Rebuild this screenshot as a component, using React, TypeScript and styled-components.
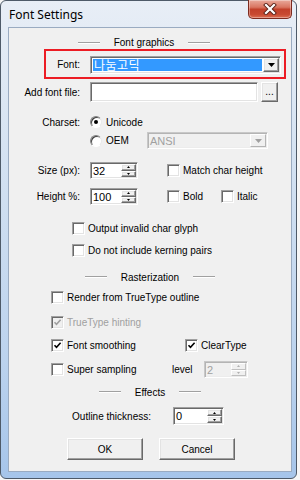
import React from "react";
import styled, { createGlobalStyle, css } from "styled-components";

const Global = createGlobalStyle`
  html, body { margin: 0; padding: 0; background: #f6f6f6; }
  * { box-sizing: border-box; }
  #root { width: 300px; height: 480px; }
`;

const sunken = css`
  border: 1px solid;
  border-color: #a0a0a0 #ffffff #ffffff #a0a0a0;
  box-shadow: inset 1px 1px 0 #696969, inset -1px -1px 0 #e3e3e3;
`;

const raised = css`
  border: 1px solid;
  border-color: #ffffff #696969 #696969 #ffffff;
  box-shadow: inset -1px -1px 0 #a0a0a0, inset 1px 1px 0 #e3e3e3;
`;

const Window = styled.div`
  width: 297px;
  height: 479px;
  display: flex;
  flex-direction: column;
  border: 1px solid #4e5a68;
  border-radius: 6px;
  background: linear-gradient(180deg, #e8eef6 0%, #d6e3f2 30%, #bcd3ee 75%, #a6c5ea 100%);
  padding: 0 4px 6px 7px;
  font-family: "Liberation Sans", Arial, sans-serif;
  font-size: 10px;
  color: #000;
`;

const TitleBar = styled.div`
  height: 26px;
  display: flex;
  align-items: center;
  justify-content: space-between;
  flex-shrink: 0;
`;

const Title = styled.span`
  font-family: "Noto Sans", "Open Sans", sans-serif;
  font-size: 12px;
  color: #000;
  padding-left: 1px;
`;

const CloseButton = styled.div`
  align-self: flex-start;
  margin-top: -1px;
  width: 44px;
  height: 19px;
  border: 1px solid #7d2b1f;
  border-top: none;
  border-radius: 0 0 5px 5px;
  background: linear-gradient(180deg, #e9a99b 0%, #d97561 40%, #c2402a 52%, #c84a31 80%, #dc6e52 100%);
  box-shadow: inset 0 0 0 1px rgba(255, 255, 255, 0.35);
  display: flex;
  align-items: center;
  justify-content: center;
`;

const Client = styled.div`
  flex: 1;
  display: flex;
  flex-direction: column;
  background: #f0f0f0;
  box-shadow: inset 0 0 0 1px #9aabc1;
  padding-top: 9px;
`;

const Header = styled.div<{ $mt: number; $h: number; $shift?: number }>`
  display: flex;
  justify-content: center;
  align-items: center;
  gap: 14px;
  margin-top: ${(p) => p.$mt}px;
  height: ${(p) => p.$h}px;
  padding-right: ${(p) => p.$shift ?? 0}px;
  flex-shrink: 0;
`;

const Rule = styled.span`
  width: 22px;
  height: 2px;
  border-top: 1px solid #a0a0a0;
  border-bottom: 1px solid #ffffff;
`;

const Row = styled.div<{ $mt: number; $h: number; $pl?: number }>`
  display: flex;
  align-items: center;
  margin-top: ${(p) => p.$mt}px;
  height: ${(p) => p.$h}px;
  padding-left: ${(p) => p.$pl ?? 0}px;
  flex-shrink: 0;
  white-space: nowrap;
`;

const FontBox = styled.div`
  margin-left: 36px;
  width: 242px;
  height: 30px;
  border: 2px solid #ec1c24;
  display: flex;
  align-items: flex-start;
  padding-top: 5px;
  flex-shrink: 0;
`;

const Label = styled.span<{ $w?: number; $gap?: number; $align?: string; $disabled?: boolean }>`
  ${(p) => (p.$w ? `width: ${p.$w}px;` : "")}
  margin-right: ${(p) => p.$gap ?? 0}px;
  text-align: ${(p) => p.$align ?? "right"};
  flex-shrink: 0;
  line-height: 13px;
  color: ${(p) => (p.$disabled ? "#a0a0a0" : "#000")};
`;

const Combo = styled.div<{ $w: number; $h: number; $disabled?: boolean }>`
  ${sunken}
  width: ${(p) => p.$w}px;
  height: ${(p) => p.$h}px;
  display: flex;
  background: ${(p) => (p.$disabled ? "#f0f0f0" : "#ffffff")};
  ${(p) => (p.$disabled ? "border-color: #c8c8c8 #ffffff #ffffff #c8c8c8; box-shadow: inset 1px 1px 0 #b4b4b4, inset -1px -1px 0 #ececec;" : "")}
  flex-shrink: 0;
`;

const Selected = styled.div`
  flex: 1;
  margin: 2px 1px 2px 2px;
  background: #3399ff;
  color: #ffffff;
  font-family: "Noto Sans CJK KR", "Noto Sans", sans-serif;
  font-size: 12px;
  line-height: 12px;
  padding-left: 1px;
  display: flex;
  align-items: center;
  letter-spacing: 0.5px;
`;

const ComboValue = styled.div<{ $disabled?: boolean }>`
  flex: 1;
  padding-left: 2px;
  display: flex;
  align-items: center;
  font-size: 11px;
  color: ${(p) => (p.$disabled ? "#a0a0a0" : "#000")};
`;

const DropButton = styled.div<{ $disabled?: boolean }>`
  ${raised}
  width: 16px;
  margin: 1px 1px 1px 0;
  background: #f0f0f0;
  display: flex;
  align-items: center;
  justify-content: center;
  ${(p) => (p.$disabled ? "border-color: #ffffff #b4b4b4 #b4b4b4 #ffffff; box-shadow: none;" : "")}
`;

const TextField = styled.div<{ $w: number; $h: number }>`
  ${sunken}
  width: ${(p) => p.$w}px;
  height: ${(p) => p.$h}px;
  background: #ffffff;
  flex-shrink: 0;
`;

const SmallButton = styled.div<{ $w: number; $h: number; $ml?: number }>`
  ${raised}
  width: ${(p) => p.$w}px;
  height: ${(p) => p.$h}px;
  margin-left: ${(p) => p.$ml ?? 0}px;
  background: #f0f0f0;
  display: flex;
  align-items: center;
  justify-content: center;
  flex-shrink: 0;
  font-size: 10px;
  line-height: 10px;
`;

const PushButton = styled.div<{ $ml?: number }>`
  ${raised}
  width: 76px;
  height: 22px;
  margin-left: ${(p) => p.$ml ?? 0}px;
  background: #f0f0f0;
  display: flex;
  align-items: center;
  justify-content: center;
  flex-shrink: 0;
  font-size: 10px;
`;

const Spin = styled.div<{ $w: number; $h: number; $ml?: number; $disabled?: boolean }>`
  ${sunken}
  width: ${(p) => p.$w}px;
  height: ${(p) => p.$h}px;
  margin-left: ${(p) => p.$ml ?? 0}px;
  display: flex;
  background: ${(p) => (p.$disabled ? "#f0f0f0" : "#ffffff")};
  ${(p) => (p.$disabled ? "border-color: #c8c8c8 #ffffff #ffffff #c8c8c8; box-shadow: inset 1px 1px 0 #b4b4b4, inset -1px -1px 0 #ececec;" : "")}
  flex-shrink: 0;
`;

const SpinText = styled.div<{ $disabled?: boolean }>`
  flex: 1;
  padding-left: 2px;
  display: flex;
  align-items: center;
  font-size: 11px;
  color: ${(p) => (p.$disabled ? "#a0a0a0" : "#000")};
`;

const SpinColumn = styled.div`
  width: 15px;
  display: flex;
  flex-direction: column;
  margin: 1px 1px 1px 0;
`;

const SpinHalf = styled.div<{ $disabled?: boolean }>`
  ${raised}
  flex: 1;
  background: #f0f0f0;
  display: flex;
  align-items: center;
  justify-content: center;
  ${(p) => (p.$disabled ? "border-color: #ffffff #c0c0c0 #c0c0c0 #ffffff; box-shadow: none;" : "")}
`;

const Option = styled.div<{ $w?: number; $ml?: number }>`
  display: flex;
  align-items: center;
  ${(p) => (p.$w ? `width: ${p.$w}px;` : "")}
  margin-left: ${(p) => p.$ml ?? 0}px;
  flex-shrink: 0;
`;

const CheckBox = styled.span<{ $disabled?: boolean }>`
  ${sunken}
  width: 13px;
  height: 13px;
  margin-right: 3px;
  background: ${(p) => (p.$disabled ? "#f0f0f0" : "#ffffff")};
  display: flex;
  align-items: center;
  justify-content: center;
  flex-shrink: 0;
`;

const RadioCircle = styled.span`
  width: 12px;
  height: 12px;
  margin-right: 4px;
  border-radius: 50%;
  border: 1px solid;
  border-color: #808080 #e8e8e8 #ffffff #808080;
  box-shadow: inset 1px 1px 0 #404040;
  background: #ffffff;
  display: flex;
  align-items: center;
  justify-content: center;
  flex-shrink: 0;
`;

const RadioDot = styled.span`
  width: 4px;
  height: 4px;
  border-radius: 50%;
  background: #000;
`;

const Arrow = ({ up, color = "#000", w = 7, h = 4 }: { up?: boolean; color?: string; w?: number; h?: number }) => (
  <svg width={w} height={h} viewBox={`0 0 ${w} ${h}`}>
    <polygon points={up ? `0,${h} ${w / 2},0 ${w},${h}` : `0,0 ${w},0 ${w / 2},${h}`} fill={color} />
  </svg>
);

const Check = ({ color = "#000" }: { color?: string }) => (
  <svg width="9" height="9" viewBox="0 0 9 9">
    <path d="M1.5 4.2 L3.5 6.3 L7.6 1.8" fill="none" stroke={color} strokeWidth="1.6" />
  </svg>
);

const CheckItem = ({ label, checked, disabled, w, ml }: { label: string; checked?: boolean; disabled?: boolean; w?: number; ml?: number }) => (
  <Option $w={w} $ml={ml}>
    <CheckBox $disabled={disabled}>{checked && <Check color={disabled ? "#a0a0a0" : "#000"} />}</CheckBox>
    <Label $align="left" $disabled={disabled}>{label}</Label>
  </Option>
);

const RadioItem = ({ label, checked, w }: { label: string; checked?: boolean; w?: number }) => (
  <Option $w={w}>
    <RadioCircle>{checked && <RadioDot />}</RadioCircle>
    <Label $align="left">{label}</Label>
  </Option>
);

const SpinBox = ({ value, w, h, ml, disabled }: { value: string; w: number; h: number; ml?: number; disabled?: boolean }) => (
  <Spin $w={w} $h={h} $ml={ml} $disabled={disabled}>
    <SpinText $disabled={disabled}>{value}</SpinText>
    <SpinColumn>
      <SpinHalf $disabled={disabled}>
        <Arrow up w={3} h={2} color={disabled ? "#b0b0b0" : "#000"} />
      </SpinHalf>
      <SpinHalf $disabled={disabled}>
        <Arrow w={3} h={2} color={disabled ? "#b0b0b0" : "#000"} />
      </SpinHalf>
    </SpinColumn>
  </Spin>
);

const SectionHeader = ({ title, mt, h, shift }: { title: string; mt: number; h: number; shift?: number }) => (
  <Header $mt={mt} $h={h} $shift={shift}>
    <Rule />
    <Label $align="center">{title}</Label>
    <Rule />
  </Header>
);

export default function App() {
  return (
    <>
      <Global />
      <Window>
        <TitleBar>
          <Title>Font Settings</Title>
          <CloseButton>
            <svg width="14" height="12" viewBox="0 0 14 12">
              <path d="M3 2 L11 10 M11 2 L3 10" stroke="#5a2219" strokeWidth="4" strokeLinecap="square" />
              <path d="M3 2 L11 10 M11 2 L3 10" stroke="#ffffff" strokeWidth="2.2" strokeLinecap="square" />
            </svg>
          </CloseButton>
        </TitleBar>
        <Client>
          <SectionHeader title="Font graphics" mt={0} h={13} shift={12} />
          <FontBox>
            <Label $w={34} $gap={10} style={{ lineHeight: "18px" }}>Font:</Label>
            <Combo $w={191} $h={18}>
              <Selected>나눔고딕</Selected>
              <DropButton>
                <Arrow />
              </DropButton>
            </Combo>
          </FontBox>

          <Row $mt={3} $h={20}>
            <Label $w={72} $gap={10}>Add font file:</Label>
            <TextField $w={168} $h={20} />
            <SmallButton $w={17} $h={20} $ml={3}>...</SmallButton>
          </Row>

          <Row $mt={12} $h={16}>
            <Label $w={72} $gap={10}>Charset:</Label>
            <RadioItem label="Unicode" checked />
          </Row>
          <Row $mt={2} $h={17} $pl={82}>
            <RadioItem label="OEM" w={57} />
            <Combo $w={121} $h={17} $disabled>
              <ComboValue $disabled>ANSI</ComboValue>
              <DropButton $disabled>
                <Arrow color="#a0a0a0" />
              </DropButton>
            </Combo>
          </Row>

          <Row $mt={13} $h={17}>
            <Label $w={72} $gap={10}>Size (px):</Label>
            <SpinBox value="32" w={48} h={17} />
            <CheckItem label="Match char height" ml={29} />
          </Row>
          <Row $mt={9} $h={17}>
            <Label $w={72} $gap={10}>Height %:</Label>
            <SpinBox value="100" w={48} h={17} />
            <CheckItem label="Bold" ml={29} w={54} />
            <CheckItem label="Italic" />
          </Row>

          <Row $mt={17} $h={13} $pl={64}>
            <CheckItem label="Output invalid char glyph" />
          </Row>
          <Row $mt={9} $h={13} $pl={64}>
            <CheckItem label="Do not include kerning pairs" />
          </Row>

          <SectionHeader title="Rasterization" mt={13} h={14} />

          <Row $mt={7} $h={13} $pl={43}>
            <CheckItem label="Render from TrueType outline" />
          </Row>
          <Row $mt={12} $h={13} $pl={43}>
            <CheckItem label="TrueType hinting" checked disabled />
          </Row>
          <Row $mt={10} $h={13} $pl={43}>
            <CheckItem label="Font smoothing" checked w={134} />
            <CheckItem label="ClearType" checked />
          </Row>
          <Row $mt={9} $h={17} $pl={43}>
            <CheckItem label="Super sampling" w={121} />
            <Label $w={32} $align="left">level</Label>
            <SpinBox value="2" w={44} h={17} disabled />
          </Row>

          <SectionHeader title="Effects" mt={7} h={14} />

          <Row $mt={8} $h={18}>
            <Label $w={143} $gap={22}>Outline thickness:</Label>
            <SpinBox value="0" w={51} h={18} />
          </Row>

          <Row $mt={13} $h={22} $pl={59}>
            <PushButton>OK</PushButton>
            <PushButton $ml={16}>Cancel</PushButton>
          </Row>
        </Client>
      </Window>
    </>
  );
}
